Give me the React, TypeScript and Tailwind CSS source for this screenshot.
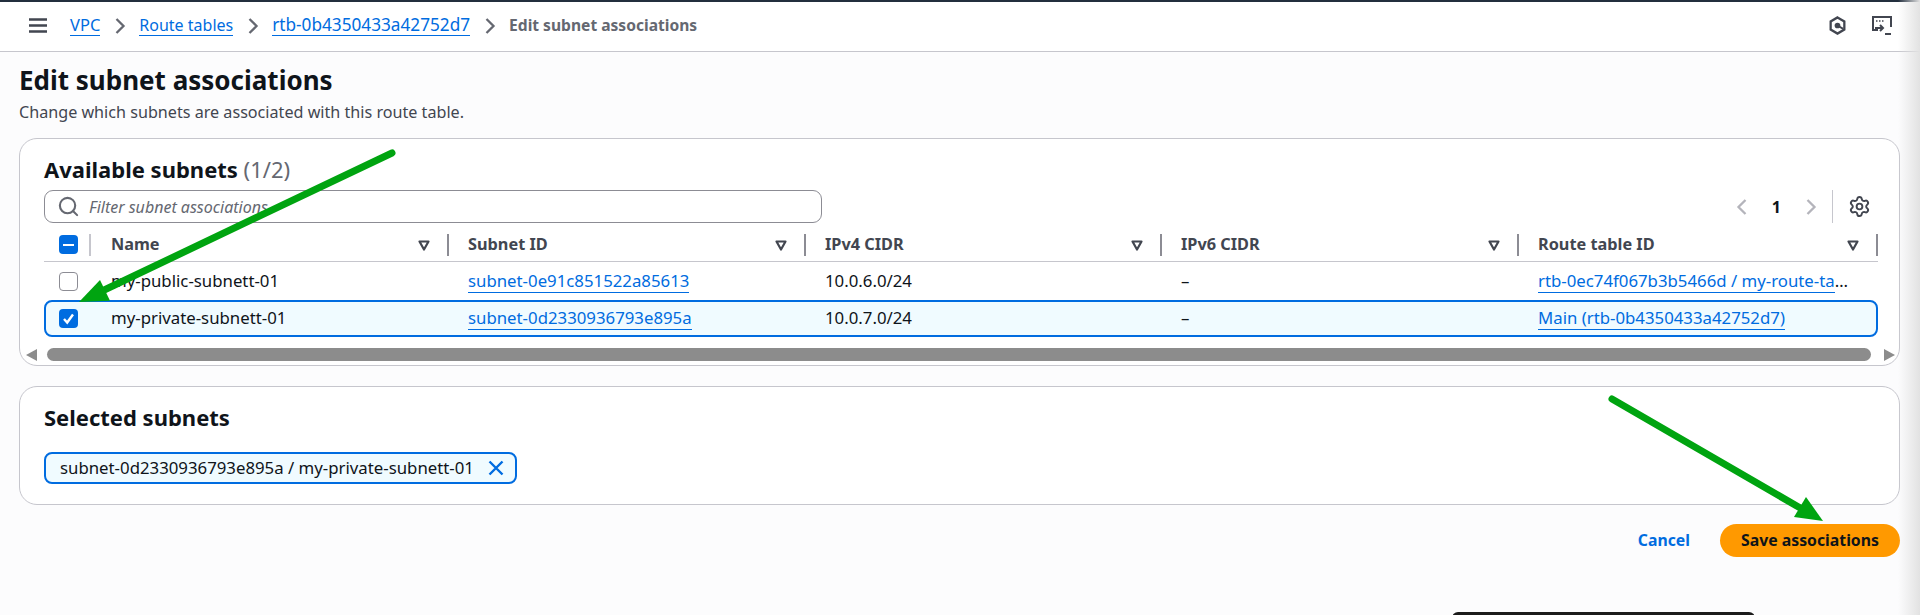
import { Search, Settings } from 'lucide-react';

const font = "font-['Noto_Sans','Liberation_Sans',sans-serif]";

const columns = [
  { title: 'Name', width: 'w-[358px]', inset: 'pl-[20px]' },
  { title: 'Subnet ID', width: 'w-[357px]', inset: 'pl-[19px]' },
  { title: 'IPv4 CIDR', width: 'w-[356px]', inset: 'pl-[19px]' },
  { title: 'IPv6 CIDR', width: 'w-[357px]', inset: 'pl-[19px]' },
  { title: 'Route table ID', width: 'w-[359px]', inset: 'pl-[19px]' },
];

const SortIcon = () => (
  <svg width="14" height="14" viewBox="0 0 14 14" fill="none">
    <path d="M2.5 3.500h9L7 11.500z" stroke="#424650" strokeWidth="2.200" strokeLinejoin="round" />
  </svg>
);

const Chevron = ({ left, color }: { left?: boolean; color: string }) => (
  <svg width="12" height="16" viewBox="0 0 12 16" fill="none">
    <path d={left ? 'M9.500 1L2.500 8l7 7' : 'M2.500 1l7 7-7 7'} stroke={color} strokeWidth="2.300" />
  </svg>
);

// green annotation arrows drawn over the page
const Arrow = ({ line, head }: { line: [number, number, number, number]; head: string }) => (
  <svg width="1920" height="615" className="pointer-events-none absolute top-0 left-0">
    <line x1={line[0]} y1={line[1]} x2={line[2]} y2={line[3]} stroke="#00a410" strokeWidth="7" strokeLinecap="round" />
    <path d={head} fill="#00a410" />
  </svg>
);

const Check = ({ state }: { state: 'on' | 'off' | 'some' }) => {
  if (state === 'off') {
    return <span className="block h-[19px] w-[19px] rounded-[4px] border border-[#8c8c94] bg-white" />;
  }
  return (
    <span className="flex h-[19px] w-[19px] items-center justify-center rounded-[4px] bg-[#006ce0]">
      {state === 'on' ? (
        <svg width="15" height="15" viewBox="0 0 15 15" fill="none">
          <path d="M3 8l3.200 3.500L12 3.500" stroke="white" strokeWidth="2.400" />
        </svg>
      ) : (
        <span className="block h-[2px] w-[11px] bg-white" />
      )}
    </span>
  );
};

const LinkText = ({ children, className = '' }: { children: string; className?: string }) => (
  <a className={`border-b border-[#006ce0] leading-[20px] text-[#006ce0] ${className}`}>{children}</a>
);

const BreadcrumbSep = () => (
  <span className="mx-[13.500px]">
    <Chevron color="#656871" />
  </span>
);

export default function App() {
  return (
    <div className={`relative h-[615px] w-[1920px] overflow-hidden bg-[#fcfcfd] ${font}`}>
      <div className="border-t-2 border-[#232f3e]" />
      <nav className="flex h-[50px] items-center border-b border-[#c6c6cd] bg-white pr-[28px] pb-[2px] pl-[29px] text-[16.500px]">
        <svg width="18" height="15" viewBox="0 0 18 15" className="mr-[23px]">
          <path d="M0 1.500h18M0 7.500h18M0 13.500h18" stroke="#424650" strokeWidth="2.400" />
        </svg>
        <LinkText>VPC</LinkText>
        <BreadcrumbSep />
        <LinkText className="text-[16px]">Route tables</LinkText>
        <BreadcrumbSep />
        <LinkText className="text-[17.200px]">rtb-0b4350433a42752d7</LinkText>
        <BreadcrumbSep />
        <span className="text-[15.600px] font-bold text-[#656871]">Edit subnet associations</span>
        <div className="ml-auto flex items-center gap-[25px]">
          <svg width="19" height="19" viewBox="0 0 20 20" fill="none">
            <path d="M10 1.500l7.200 4.200v8.600L10 18.500l-7.200-4.200V5.700z" stroke="#424650" strokeWidth="2.400" />
            <circle cx="10" cy="10" r="3" fill="#424650" />
            <path d="M10 10l6 3.500" stroke="#424650" strokeWidth="2" />
          </svg>
          <svg width="20" height="20" viewBox="0 0 20 20" fill="none">
            <path d="M6 14H1V1h18v10" stroke="#424650" strokeWidth="2" />
            <path d="M4 5h1.500M7 5h1.500M10 5h1.500" stroke="#424650" strokeWidth="1.500" />
            <path d="M3 12h8M8 9l3 3-3 3" stroke="#424650" strokeWidth="2" />
            <path d="M13 18h6" stroke="#424650" strokeWidth="2" />
          </svg>
        </div>
      </nav>

      <main className="pr-[20px] pl-[19px]">
        <h1 className="mt-[9px] text-[26px] leading-[38px] font-bold text-[#0f141a]">Edit subnet associations</h1>
        <p className="mt-[2px] text-[16.150px] leading-[22px] text-[#424650]">Change which subnets are associated with this route table.</p>

        <section className="mt-[15px] h-[228px] rounded-[18px] border border-[#c6c6cd] bg-white pt-[16px] pr-[21px] pl-[24px]">
          <h2 className="text-[22px] leading-[28px] font-bold text-[#0f141a]">
            Available subnets <span className="font-normal text-[#656871]">(1/2)</span>
          </h2>
          <div className="mt-[7px] flex h-[33px] items-center">
            <div className="flex h-full w-[778px] items-center gap-[9px] rounded-[9px] border border-[#8c8c94] bg-white pl-[12px]">
              <Search size={23} strokeWidth={2.200} className="text-[#656871]" />
              <span className="text-[16px] text-[#656871] italic">Filter subnet associations</span>
            </div>
            <div className="ml-auto flex h-full items-center">
              <Chevron left color="#b4b4bb" />
              <span className="mx-[24px] text-[16px] font-bold text-[#0f141a]">1</span>
              <Chevron color="#b4b4bb" />
              <span className="mx-[15px] h-full w-px bg-[#c6c6cd]" />
              <Settings size={23} strokeWidth={2} className="mr-[7px] text-[#424650]" />
            </div>
          </div>

          <div className="mt-[6px] w-[1834px]">
            <div className="flex h-[33px] items-center border-b border-[#c6c6cd] pb-[1px] text-[16.300px] font-bold text-[#424650]">
              <div className="flex w-[47px] items-center justify-between pl-[15px]">
                <Check state="some" />
                <span className="h-[22px] w-[2px] bg-[#c6c6cd]" />
              </div>
              {columns.map((col) => (
                <div key={col.title} className={`flex items-center justify-between ${col.inset} ${col.width}`}>
                  <span>{col.title}</span>
                  <div className="flex items-center gap-[16px]">
                    <SortIcon />
                    <span className="h-[22px] w-[2px] bg-[#8c8c94]" />
                  </div>
                </div>
              ))}
            </div>

            <div className="flex h-[38px] items-center text-[16.800px] text-[#0f141a]">
              <div className="w-[47px] pl-[15px]">
                <Check state="off" />
              </div>
              <div className="w-[358px] pl-[20px]">my-public-subnett-01</div>
              <div className="w-[357px] pl-[19px]"><LinkText>subnet-0e91c851522a85613</LinkText></div>
              <div className="w-[356px] pl-[19px]">10.0.6.0/24</div>
              <div className="w-[357px] pl-[19px]">–</div>
              <div className="w-[359px] pl-[19px] whitespace-nowrap"><LinkText>rtb-0ec74f067b3b5466d / my-route-ta</LinkText>…</div>
            </div>

            <div className="flex h-[37px] items-center rounded-[8px] border-2 border-[#006ce0] bg-[#f0fbff] pb-[2px] text-[16.800px] text-[#0f141a]">
              <div className="w-[45px] pt-[2px] pl-[13px]">
                <Check state="on" />
              </div>
              <div className="w-[358px] pl-[20px]">my-private-subnett-01</div>
              <div className="w-[357px] pl-[19px]"><LinkText>subnet-0d2330936793e895a</LinkText></div>
              <div className="w-[356px] pl-[19px]">10.0.7.0/24</div>
              <div className="w-[357px] pl-[19px]">–</div>
              <div className="w-[357px] pl-[19px]"><LinkText>Main (rtb-0b4350433a42752d7)</LinkText></div>
            </div>
          </div>

          {/* horizontal scrollbar of the table */}
          <div className="mt-[11px] -ml-[18px] flex h-[13px] w-[1869px] items-center">
            <span className="h-0 w-0 border-y-[6px] border-r-[11px] border-y-transparent border-r-[#8c8c8c]" />
            <span className="mr-[13px] ml-[10px] h-full flex-1 rounded-full bg-[#8c8c8c]" />
            <span className="h-0 w-0 border-y-[6px] border-l-[11px] border-y-transparent border-l-[#8c8c8c]" />
          </div>
        </section>

        <section className="mt-[20px] h-[119px] rounded-[18px] border border-[#c6c6cd] bg-white pt-[16px] pl-[24px]">
          <h2 className="text-[22px] leading-[28px] font-bold text-[#0f141a]">Selected subnets</h2>
          <div className="mt-[21px] flex h-[32px] w-[473px] items-center justify-between rounded-[8px] border-2 border-[#006ce0] bg-[#f0fbff] pr-[11px] pl-[14px] text-[16.800px] whitespace-nowrap text-[#0f141a]">
            <span>subnet-0d2330936793e895a / my-private-subnett-01</span>
            <svg width="16" height="16" viewBox="0 0 16 16" fill="none">
              <path d="M1.500 1.500l13 13M14.500 1.500l-13 13" stroke="#006ce0" strokeWidth="2.400" />
            </svg>
          </div>
        </section>

        <div className="mt-[19px] flex items-center justify-end font-bold">
          <span className="mr-[30px] text-[15.800px] text-[#006ce0]">Cancel</span>
          <button className="h-[33px] w-[180px] rounded-full bg-[#ff9900] text-[15.800px] text-[#0f141a]">Save associations</button>
        </div>
      </main>

      <div className="pointer-events-none absolute top-0 right-0 h-full w-[22px] bg-linear-to-r from-white/0 to-[#e2e2e2]" />
      <div className="absolute top-[612px] left-[1452px] h-[10px] w-[303px] rounded-t-[6px] bg-[#1b1b1b]" />

      <Arrow line={[392, 153, 100, 292]} head="M79 302L100 280L110 300.700z" />
      <Arrow line={[1612, 399, 1802, 509]} head="M1823 521L1806 497L1794 517z" />
    </div>
  );
}
